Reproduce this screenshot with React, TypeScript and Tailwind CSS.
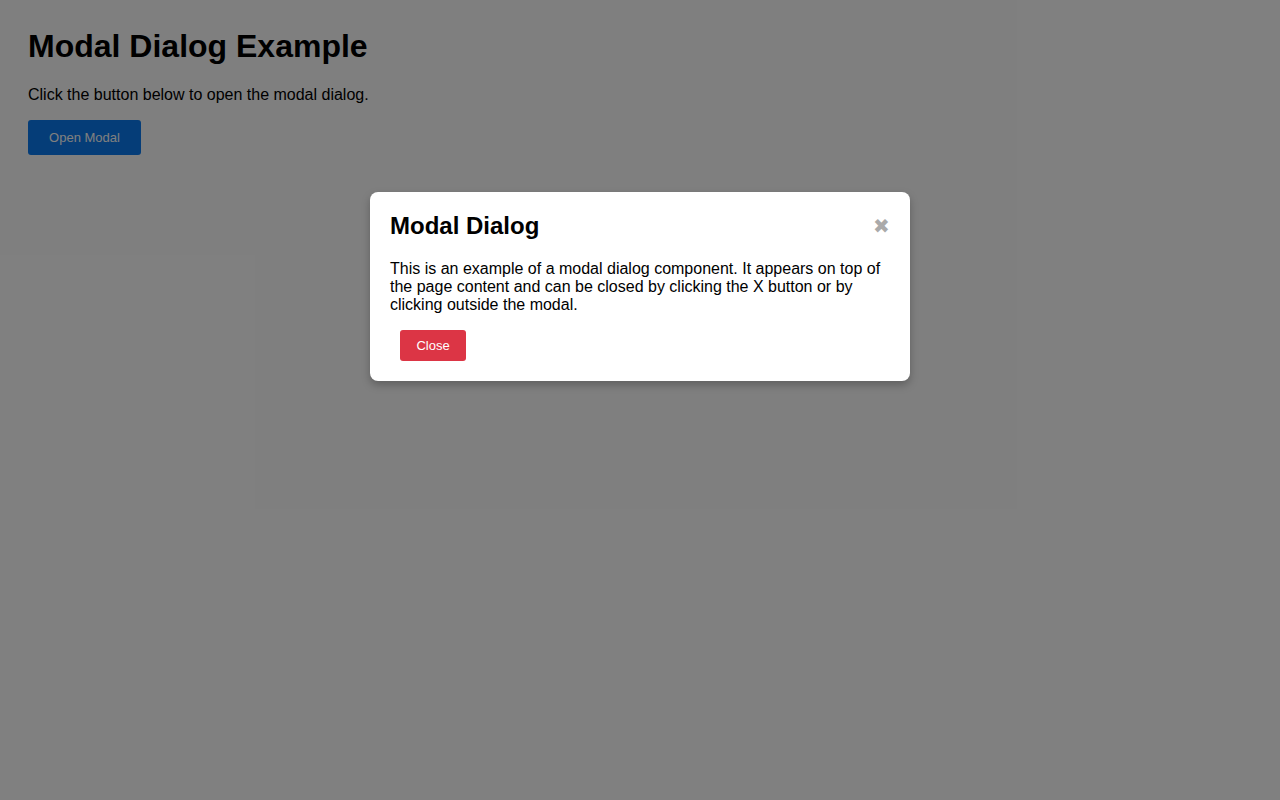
import { useState } from "react";

const App = () => {
  const [open, setOpen] = useState(true);

  return (
    <div className="relative min-h-[800px] bg-white px-7 pt-7 font-['Liberation_Sans',Arial,sans-serif] text-black">
      <h1 className="mb-[21px] text-[32px] leading-[37px] font-bold">Modal Dialog Example</h1>
      <p className="mb-4 text-base leading-[18px]">Click the button below to open the modal dialog.</p>
      <button
        onClick={() => setOpen(true)}
        className="h-[35px] w-[113px] rounded-[3px] bg-[#0a7bf0] text-[13px] text-white"
      >
        Open Modal
      </button>

      {open && (
        // dimmed backdrop; clicking outside the card closes it
        <div
          onClick={() => setOpen(false)}
          className="absolute inset-0 flex justify-center bg-black/50 pt-[192px]"
        >
          <div
            onClick={(e) => e.stopPropagation()}
            className="h-fit w-[540px] rounded-lg bg-white px-5 pt-5 pb-5 shadow-[0_4px_8px_rgba(0,0,0,0.25)]"
          >
            <div className="flex items-center justify-between">
              <h2 className="text-2xl leading-7 font-bold">Modal Dialog</h2>
              <button
                onClick={() => setOpen(false)}
                className="text-[20px] leading-none text-[#aaa]"
              >
                ✖
              </button>
            </div>
            <p className="mt-[20px] text-base leading-[18px]">
              This is an example of a modal dialog component. It appears on top of the page content and can be
              closed by clicking the X button or by clicking outside the modal.
            </p>
            <button
              onClick={() => setOpen(false)}
              className="mt-[16px] ml-[10px] h-[31px] w-[66px] rounded-[3px] bg-[#dc3545] text-[13px] text-white"
            >
              Close
            </button>
          </div>
        </div>
      )}
    </div>
  );
};

export default App;
